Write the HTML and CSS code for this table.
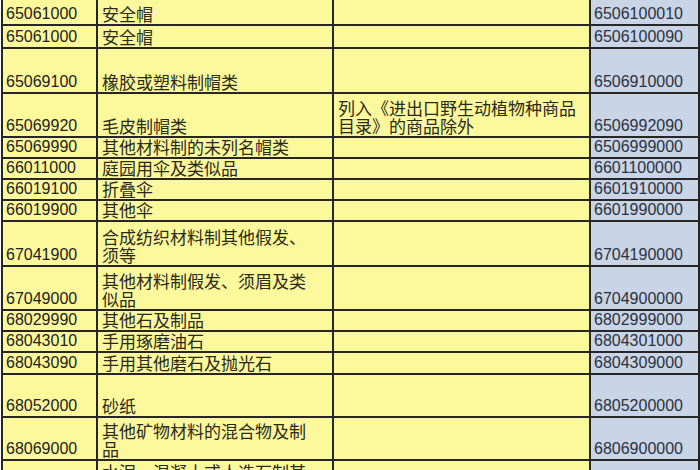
FILE: index.html
```html
<!DOCTYPE html>
<html lang="zh-CN">
<head>
<meta charset="utf-8">
<title>商品编码表</title>
<link rel="stylesheet" href="styles.css">
</head>
<body>
<table class="sheet">
  <colgroup>
    <col class="c-code">
    <col class="c-name">
    <col class="c-note">
    <col class="c-hs">
  </colgroup>
  <tbody>
    <tr class="h25 first"><td class="code">65061000</td><td class="name">安全帽</td><td class="note"></td><td class="hs">6506100010</td></tr>
    <tr class="h23"><td class="code">65061000</td><td class="name">安全帽</td><td class="note"></td><td class="hs">6506100090</td></tr>
    <tr class="h45"><td class="code">65069100</td><td class="name">橡胶或塑料制帽类</td><td class="note"></td><td class="hs">6506910000</td></tr>
    <tr class="h44"><td class="code">65069920</td><td class="name">毛皮制帽类</td><td class="note">列入《进出口野生动植物种商品<br>目录》的商品除外</td><td class="hs">6506992090</td></tr>
    <tr class="h20"><td class="code">65069990</td><td class="name">其他材料制的未列名帽类</td><td class="note"></td><td class="hs">6506999000</td></tr>
    <tr class="h21"><td class="code">66011000</td><td class="name">庭园用伞及类似品</td><td class="note"></td><td class="hs">6601100000</td></tr>
    <tr class="h20"><td class="code">66019100</td><td class="name">折叠伞</td><td class="note"></td><td class="hs">6601910000</td></tr>
    <tr class="h20"><td class="code">66019900</td><td class="name">其他伞</td><td class="note"></td><td class="hs">6601990000</td></tr>
    <tr class="h45"><td class="code">67041900</td><td class="name">合成纺织材料制其他假发、<br>须等</td><td class="note"></td><td class="hs">6704190000</td></tr>
    <tr class="h44"><td class="code">67049000</td><td class="name">其他材料制假发、须眉及类<br>似品</td><td class="note"></td><td class="hs">6704900000</td></tr>
    <tr class="h20"><td class="code">68029990</td><td class="name">其他石及制品</td><td class="note"></td><td class="hs">6802999000</td></tr>
    <tr class="h21"><td class="code">68043010</td><td class="name">手用琢磨油石</td><td class="note"></td><td class="hs">6804301000</td></tr>
    <tr class="h22"><td class="code">68043090</td><td class="name">手用其他磨石及抛光石</td><td class="note"></td><td class="hs">6804309000</td></tr>
    <tr class="h43"><td class="code">68052000</td><td class="name">砂纸</td><td class="note"></td><td class="hs">6805200000</td></tr>
    <tr class="h43"><td class="code">68069000</td><td class="name">其他矿物材料的混合物及制<br>品</td><td class="note"></td><td class="hs">6806900000</td></tr>
    <tr class="h44 last"><td class="code"></td><td class="name top">水泥、混凝土或人造石制其</td><td class="note"></td><td class="hs"></td></tr>
  </tbody>
</table>
</body>
</html>
```
FILE: styles.css
```css
html, body {
  margin: 0;
  padding: 0;
  background: #ffffff;
  overflow: hidden;
}

.sheet {
  margin-left: 1px;
  border-collapse: collapse;
  table-layout: fixed;
  width: 697px;
  color: #222222;
}

.c-code { width: 95px; }
.c-name { width: 236px; }
.c-note { width: 257px; }
.c-hs   { width: 109px; }

.sheet td {
  border: 2px solid #262626;
  padding: 0 0 1px 3px;
  vertical-align: bottom;
  line-height: 18px;
  background: #fcf89c;
  white-space: nowrap;
  box-sizing: border-box;
}

.sheet tr.first td { border-top: none; }

.sheet td.code,
.sheet td.hs {
  font-family: "Liberation Sans", Arial, sans-serif;
  font-size: 16px;
}

.sheet td.hs {
  background: #c9d4e6;
  color: #2b3240;
}

.sheet td.name,
.sheet td.note {
  font-family: "Noto Sans CJK SC", "Noto Sans", sans-serif;
  font-size: 17px;
  padding-left: 4px;
  color: #2a2a1a;
}

.sheet td.top {
  vertical-align: top;
  padding-top: 2px;
}

.h20 td { height: 20px; }
.h21 td { height: 21px; }
.h22 td { height: 22px; }
.h23 td { height: 23px; }
.h25 td { height: 25px; }
.h43 td { height: 43px; }
.h44 td { height: 44px; }
.h45 td { height: 45px; }
```
